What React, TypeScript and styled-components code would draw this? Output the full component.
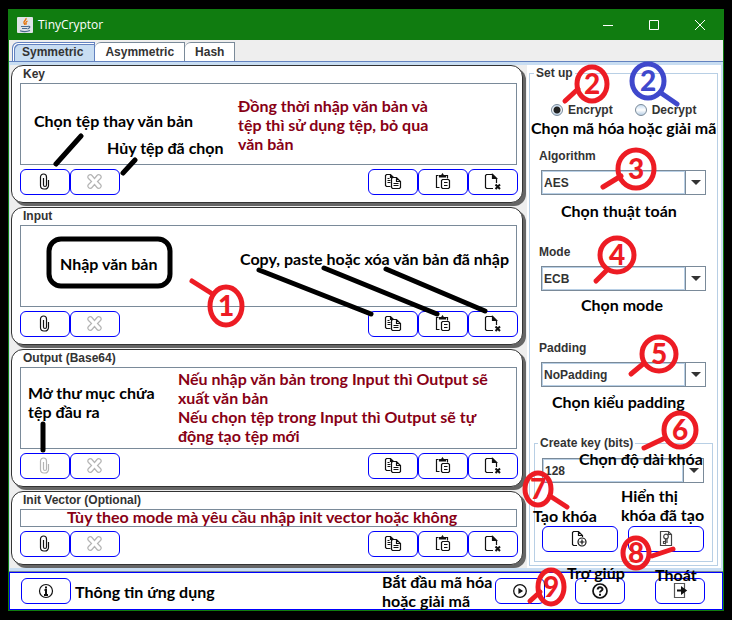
import React from "react";
import styled, { createGlobalStyle, css } from "styled-components";

const GlobalStyle = createGlobalStyle`
  *, *::before, *::after { box-sizing: border-box; }
  body { margin: 0; background: #000; }
  button, select, textarea, input { font: inherit; color: inherit; }
`;

const Page = styled.div`
  position: relative;
  min-width: 732px;
  padding: 9px 8px;
  font: bold 12px/15px "Liberation Sans", Arial, sans-serif;
  color: #333;
`;

const Window = styled.main`
  border: 1px solid #107c10;
  border-top: 0;
  background: #eee;
`;

const TitleBar = styled.header`
  display: flex;
  align-items: center;
  height: 31px;
  padding-left: 8px;
  background: #107c10;
  color: #fff;
`;

const AppTitle = styled.h1`
  flex: 1;
  margin: 0 0 0 5px;
  font: 12px/16px "Open Sans", "Noto Sans", sans-serif;
`;

const CaptionButton = styled.button`
  display: grid;
  place-items: center;
  width: 46px;
  height: 31px;
  padding: 0;
  border: 0;
  background: none;
`;

const TabStrip = styled.nav`
  display: flex;
  height: 21px;
  padding: 2px 3px 0;
`;

const Tab = styled.button<{ $active?: boolean }>`
  height: 19px;
  padding: 0 10px;
  border: 1px solid #7a8a99;
  border-left-width: 0;
  border-bottom: 0;
  border-top-left-radius: 6px;
  background: #fff;
  line-height: 17px;
  ${(p) =>
    p.$active &&
    css`
      padding: 0 11px 0 9px;
      border: 1px solid #6382bf;
      border-bottom: 0;
      background: #c8ddf2;
      box-shadow: inset 1px 1px 0 #fff, inset 2px 2px 0 #6382bf;
    `}
`;

const Pane = styled.div`
  display: flex;
  border: solid #c8ddf2;
  border-width: 3px 2px 3px 1px;
  box-shadow: 0 -1px 0 #6382bf, 0 1px 0 #7a8a99;
  margin-top: 1px;
`;

const TextColumn = styled.div`
  display: flex;
  flex: 1;
  flex-direction: column;
  gap: 4px;
  padding: 0 4px 3px 1px;
`;

const Panel = styled.section`
  padding: 0 5px 7px 8px;
  border: 1px solid #333;
  border-radius: 12px;
  background: #fff;
  box-shadow: 3px 3px 0 #666;
`;

const PanelTitle = styled.label`
  display: block;
  height: 17px;
  padding-left: 3px;
  line-height: 16px;
`;

const TextBox = styled.textarea<{ $short?: boolean }>`
  display: block;
  width: 100%;
  height: ${(p) => (p.$short ? 18 : 82)}px;
  padding: 0 4px;
  border: 1px solid #7a8a99;
  background: #fff;
  resize: none;
  overflow: hidden;
  outline: 0;
`;

const ButtonRow = styled.div`
  display: flex;
  margin: 4px -1px 0 0;
`;

const Spacer = styled.span`
  flex: 1;
`;

const IconButton = styled.button<{ $wide?: boolean }>`
  display: grid;
  place-items: center;
  flex: ${(p) => (p.$wide ? "1" : "0 0 50px")};
  height: 26px;
  padding: 0;
  border: 1px solid #00f;
  border-radius: 6px;
  background: #fff;
  color: #111;
  &:disabled { color: #b4b4b4; }
`;

const SetupColumn = styled.aside`
  flex: 0 0 194px;
  padding: 1px 3px 2px 2px;
  background: #fff;
`;

const Group = styled.fieldset`
  min-width: 0;
  margin: 0;
  padding: 0 4px 3px;
  border: 1px solid #b8cfe5;
`;

const KeyGroup = styled(Group)`
  padding: 7px 8px 9px 7px;
`;

const Legend = styled.legend<{ $inset?: boolean }>`
  margin-left: ${(p) => (p.$inset ? -4 : 0)}px;
  padding: 0 2px;
  line-height: 15px;
`;

const RadioRow = styled.div`
  display: flex;
  gap: 22px;
  padding: 21px 0 30px 17px;
`;

const RadioLabel = styled.label`
  display: flex;
  align-items: center;
  gap: 5px;
  line-height: 16px;
`;

const Radio = styled.input`
  appearance: none;
  width: 12px;
  height: 12px;
  margin: 0;
  border: 1px solid #7a8a99;
  border-radius: 50%;
  background: linear-gradient(#c8ddf2, #fff 50%, #b8cfe5);
  &:checked {
    background: radial-gradient(circle, #222 0 3px, transparent 4px), linear-gradient(#c8ddf2, #fff 50%, #b8cfe5);
  }
`;

const Field = styled.div`
  padding: 0 7px 49px;
`;

const FieldLabel = styled.label`
  display: block;
  margin: 0 0 6px -2px;
  line-height: 16px;
`;

const Combo = styled.div`
  display: grid;
  grid-template-columns: 1fr 20px;
  height: 25px;
  border: 1px solid #7a8a99;
  background: #fff;
`;

const Select = styled.select`
  grid-area: 1 / 1 / 2 / 3;
  appearance: none;
  min-width: 0;
  padding: 1px 22px 0 2px;
  border: 0;
  border-radius: 0;
  background: transparent;
  box-shadow: inset 1px 1px 0 #b8cfe5, inset 0 -1px 0 #b8cfe5;
  outline: 0;
`;

const ComboArrow = styled.span`
  grid-area: 1 / 2;
  display: grid;
  place-items: center;
  border-left: 1px solid #7a8a99;
  background: #fff;
  box-shadow: -1px 0 0 #b8cfe5;
  pointer-events: none;
`;

const KeyButtons = styled.div`
  display: flex;
  gap: 10px;
  margin-top: 43px;
`;

const Footer = styled.footer`
  display: flex;
  gap: 30px;
  margin-top: 1px;
  padding: 5px 17px 5px 11px;
  border: 1px solid #00f;
  background: #fff;
`;

const Annotations = styled.div`
  position: absolute;
  inset: 0;
  pointer-events: none;
`;

const Strokes = styled.svg`
  position: absolute;
  inset: 0;
`;

const Note = styled.p<{ $x: number; $y: number; $red?: boolean }>`
  position: absolute;
  left: ${(p) => p.$x}px;
  top: ${(p) => p.$y}px;
  margin: 0;
  font: bold 16px/19px Lato, "Open Sans", sans-serif;
  color: ${(p) => (p.$red ? "#880015" : "#000")};
  white-space: pre;
`;

const icons: Record<string, React.ReactNode> = {
  clip: <path d="M12.500 7v5.500A3.500 3.500 0 0 1 9 16H8a3.500 3.500 0 0 1-3.500-3.500V4a3 3 0 0 1 6 0v8a1.500 1.500 0 0 1-3 0V5" />,
  cancel: (
    <path d="M8.500 5.500 11 2.500a2.200 2.200 0 0 1 3.500 3l-3 3 3 3a2.200 2.200 0 0 1-3.500 3l-2.500-3-2.500 3a2.200 2.200 0 0 1-3.500-3l3-3-3-3a2.200 2.200 0 0 1 3.500-3z" />
  ),
  copy: (
    <>
      <path d="M6.500 13.500h-4l-1-1v-10l1-1h4l3 3M6.500 1.500v3h3M3.500 5.500h2M3.500 7.500h3M3.500 9.500h3" />
      <path d="M8.500 4.500h4l4 4v6l-1 1h-7l-1-1v-9zM12.500 4.500v4h4M9.500 10.500h5M9.500 12.500h5" />
    </>
  ),
  paste: (
    <>
      <path d="M5.500 14.500h-3v-12h2M11.500 2.500h2v3" />
      <path d="M5.500 4V2.500h2l1-1.500 1 1.500h2V4z" fill="currentColor" />
      <path d="M8.500 6.500h6l1 1v7l-1 1h-6l-1-1v-7zM10 9.500h3.500M10 12.500h3.500" />
    </>
  ),
  clear: (
    <>
      <path d="M9 15.500H2.500l-1-1v-12l1-1h6l4 4V10" />
      <path d="M8.500 1.500v4h4z" fill="currentColor" />
      <path d="m11.500 11.500 4.500 4.500m0-4.500L11.500 16" strokeWidth="2" />
    </>
  ),
  create: (
    <>
      <path d="M6 15.500H2.500l-1-1v-12l1-1h5l4 4V7M7.500 1.500v4h4" />
      <circle cx="11" cy="12" r="4" />
      <path d="M8.500 12h5M11 9.500v5" />
    </>
  ),
  show: (
    <g stroke="#444">
      <path d="M3.500 15.500v-14h8l3 3v11zM11.500 1.500v3h3" />
      <circle cx="9" cy="6.500" r="2.300" />
      <path d="M8.500 9v5.500M8.500 13.500h-2v-2h2M10 9v4" />
    </g>
  ),
  info: (
    <>
      <circle cx="9" cy="9" r="6.500" />
      <path d="M9 4.500v2M7.500 8H9v4.500M7 13h4" strokeWidth="2" />
    </>
  ),
  run: (
    <>
      <circle cx="9" cy="9" r="6.300" strokeWidth="1.300" />
      <path d="m8 7 3 2-3 2z" fill="currentColor" />
    </>
  ),
  help: (
    <>
      <circle cx="9" cy="9" r="7" strokeWidth="1.700" />
      <path d="M6.700 7.500c0-3 4.800-3 4.800-.3 0 1.600-2.500 1.500-2.500 3.300M9 11.700v2" strokeWidth="2" />
    </>
  ),
  exit: (
    <>
      <path d="M3.500 1.500h10v14h-10z" stroke="#555" />
      <path d="M6 8.500h4.500M11 6l3.500 2.500L11 11z" strokeWidth="2" fill="currentColor" />
    </>
  ),
};

const Icon = ({ name }: { name: string }) => (
  <svg width="18" height="18" viewBox="0 0 18 18" fill="none" stroke="currentColor" strokeWidth="1.200" aria-hidden="true">
    {icons[name]}
  </svg>
);

const JavaIcon = () => (
  <svg width="16" height="16" viewBox="0 0 16 16" aria-hidden="true">
    <rect width="16" height="16" rx="1" fill="#dfe3e8" />
    <path d="M9 1c1 2-3 3-2 5 .3.800 1 1 1 2M10.500 4C8.500 5 8.500 6 9.500 7.500" fill="none" stroke="#e76f00" strokeWidth="1.300" />
    <path d="M4 9.500h7M5 11.500h5M3 13.800c3 1 7 1 10-.3M11 9.300c3-.5 2 2-.5 2.500" fill="none" stroke="#4a6a8f" strokeWidth="1.200" />
  </svg>
);

const TextPanel = ({ id, title, short, noFile }: { id: string; title: string; short?: boolean; noFile?: boolean }) => (
  <Panel>
    <PanelTitle htmlFor={id}>{title}</PanelTitle>
    <TextBox id={id} $short={short} />
    <ButtonRow>
      <IconButton aria-label="Choose file" disabled={noFile}><Icon name="clip" /></IconButton>
      <IconButton aria-label="Cancel file" disabled><Icon name="cancel" /></IconButton>
      <Spacer />
      <IconButton aria-label="Copy"><Icon name="copy" /></IconButton>
      <IconButton aria-label="Paste"><Icon name="paste" /></IconButton>
      <IconButton aria-label="Clear"><Icon name="clear" /></IconButton>
    </ButtonRow>
  </Panel>
);

const ComboBox = ({ id, value, label }: { id: string; value: string; label?: string }) => (
  <Combo>
    <Select id={id} aria-label={label}><option>{value}</option></Select>
    <ComboArrow>
      <svg width="10" height="5" viewBox="0 0 10 5" aria-hidden="true"><path d="M0 0h10L5 5z" fill="#333" /></svg>
    </ComboArrow>
  </Combo>
);

const RED = "#ed1c24";
const BLUE = "#3f48cc";

const marks = [
  { n: 1, cx: 226, cy: 306, rx: 16, ry: 19, tail: "M192 281 211 293" },
  { n: 2, cx: 592, cy: 84, rx: 15, ry: 17, tail: "M565 101 578 89" },
  { n: 2, cx: 648, cy: 81, rx: 16, ry: 17, tail: "M661 93 677 104", color: BLUE },
  { n: 3, cx: 636, cy: 169, rx: 18, ry: 19, tail: "M603 187 621 176" },
  { n: 4, cx: 617, cy: 255, rx: 17, ry: 17, tail: "M596 281 607 270" },
  { n: 5, cx: 659, cy: 354, rx: 17, ry: 17, tail: "M631 374 643 364" },
  { n: 6, cx: 680, cy: 430, rx: 16, ry: 17, tail: "M644 448 665 438" },
  { n: 7, cx: 538, cy: 489, rx: 13, ry: 16, tail: "M550 496 567 507" },
  { n: 8, cx: 636, cy: 553, rx: 13, ry: 15, tail: "M652 556 673 549" },
  { n: 9, cx: 551, cy: 587, rx: 13, ry: 17, tail: "M530 601 540 592" },
];

const notes = [
  { x: 34, y: 111, text: "Chọn tệp thay văn bản" },
  { x: 107, y: 138, text: "Hủy tệp đã chọn" },
  { x: 238, y: 96, red: true, text: "Đồng thời nhập văn bản và\ntệp thì sử dụng tệp, bỏ qua\nvăn bản" },
  { x: 60, y: 254, text: "Nhập văn bản" },
  { x: 240, y: 249, text: "Copy, paste hoặc xóa văn bản đã nhập" },
  { x: 28, y: 383, text: "Mở thư mục chứa\ntệp đầu ra" },
  { x: 178, y: 369, red: true, text: "Nếu nhập văn bản trong Input thì Output sẽ\nxuất văn bản\nNếu chọn tệp trong Input thì Output sẽ tự\nđộng tạo tệp mới" },
  { x: 67, y: 507, red: true, text: "Tùy theo mode mà yêu cầu nhập init vector hoặc không" },
  { x: 75, y: 582, text: "Thông tin ứng dụng" },
  { x: 382, y: 572, text: "Bắt đầu mã hóa\nhoặc giải mã" },
  { x: 567, y: 563, text: "Trợ giúp" },
  { x: 655, y: 565, text: "Thoát" },
  { x: 531, y: 118, text: "Chọn mã hóa hoặc giải mã" },
  { x: 561, y: 201, text: "Chọn thuật toán" },
  { x: 581, y: 295, text: "Chọn mode" },
  { x: 552, y: 392, text: "Chọn kiểu padding" },
  { x: 579, y: 449, text: "Chọn độ dài khóa" },
  { x: 533, y: 506, text: "Tạo khóa" },
  { x: 621, y: 486, text: "Hiển thị\nkhóa đã tạo" },
];

export default function App() {
  return (
    <Page>
      <GlobalStyle />
      <Window>
        <TitleBar>
          <JavaIcon />
          <AppTitle>TinyCryptor</AppTitle>
          <CaptionButton aria-label="Minimize"><svg width="10" height="10" stroke="#fff"><path d="M0 5.500h10" /></svg></CaptionButton>
          <CaptionButton aria-label="Maximize"><svg width="10" height="10" stroke="#fff" fill="none"><path d="M.5.5h9v9h-9z" /></svg></CaptionButton>
          <CaptionButton aria-label="Close"><svg width="10" height="10" stroke="#fff"><path d="m0 0 10 10M10 0 0 10" /></svg></CaptionButton>
        </TitleBar>
        <TabStrip>
          <Tab $active>Symmetric</Tab>
          <Tab>Asymmetric</Tab>
          <Tab>Hash</Tab>
        </TabStrip>
        <Pane>
          <TextColumn>
            <TextPanel id="key" title="Key" />
            <TextPanel id="input" title="Input" />
            <TextPanel id="output" title="Output (Base64)" noFile />
            <TextPanel id="iv" title="Init Vector (Optional)" short />
          </TextColumn>
          <SetupColumn>
            <Group>
              <Legend>Set up</Legend>
              <RadioRow>
                <RadioLabel><Radio type="radio" name="direction" defaultChecked />Encrypt</RadioLabel>
                <RadioLabel><Radio type="radio" name="direction" />Decrypt</RadioLabel>
              </RadioRow>
              <Field><FieldLabel htmlFor="algorithm">Algorithm</FieldLabel><ComboBox id="algorithm" value="AES" /></Field>
              <Field><FieldLabel htmlFor="mode">Mode</FieldLabel><ComboBox id="mode" value="ECB" /></Field>
              <Field><FieldLabel htmlFor="padding">Padding</FieldLabel><ComboBox id="padding" value="NoPadding" /></Field>
              <KeyGroup>
                <Legend $inset>Create key (bits)</Legend>
                <ComboBox id="bits" value="128" label="Key length" />
                <KeyButtons>
                  <IconButton $wide aria-label="Create key"><Icon name="create" /></IconButton>
                  <IconButton $wide aria-label="Show key"><Icon name="show" /></IconButton>
                </KeyButtons>
              </KeyGroup>
            </Group>
          </SetupColumn>
        </Pane>
        <Footer>
          <IconButton aria-label="About"><Icon name="info" /></IconButton>
          <Spacer />
          <IconButton aria-label="Run"><Icon name="run" /></IconButton>
          <IconButton aria-label="Help"><Icon name="help" /></IconButton>
          <IconButton aria-label="Exit"><Icon name="exit" /></IconButton>
        </Footer>
      </Window>
      <Annotations>
        {notes.map((n) => (
          <Note key={n.text} $x={n.x} $y={n.y} $red={n.red}>{n.text}</Note>
        ))}
        <Strokes width="732" height="620" fill="none" strokeWidth="5" strokeLinecap="round">
          <g stroke="#000">
            <path d="M81 136 56 164M135 160 123 173M259 270 371 314M324 268 437 314M386 269 485 311M43 424V450" />
            <rect x="49" y="239" width="121" height="47" rx="12" />
          </g>
          {marks.map((m, i) => (
            <g key={i} stroke={m.color ?? RED}>
              <ellipse cx={m.cx} cy={m.cy} rx={m.rx} ry={m.ry} />
              <path d={m.tail} />
              <text x={m.cx} y={m.cy + 10} textAnchor="middle" stroke="none" fill={m.color ?? RED} fontFamily="Lato, sans-serif" fontWeight="900" fontSize="28">{m.n}</text>
            </g>
          ))}
        </Strokes>
      </Annotations>
    </Page>
  );
}
